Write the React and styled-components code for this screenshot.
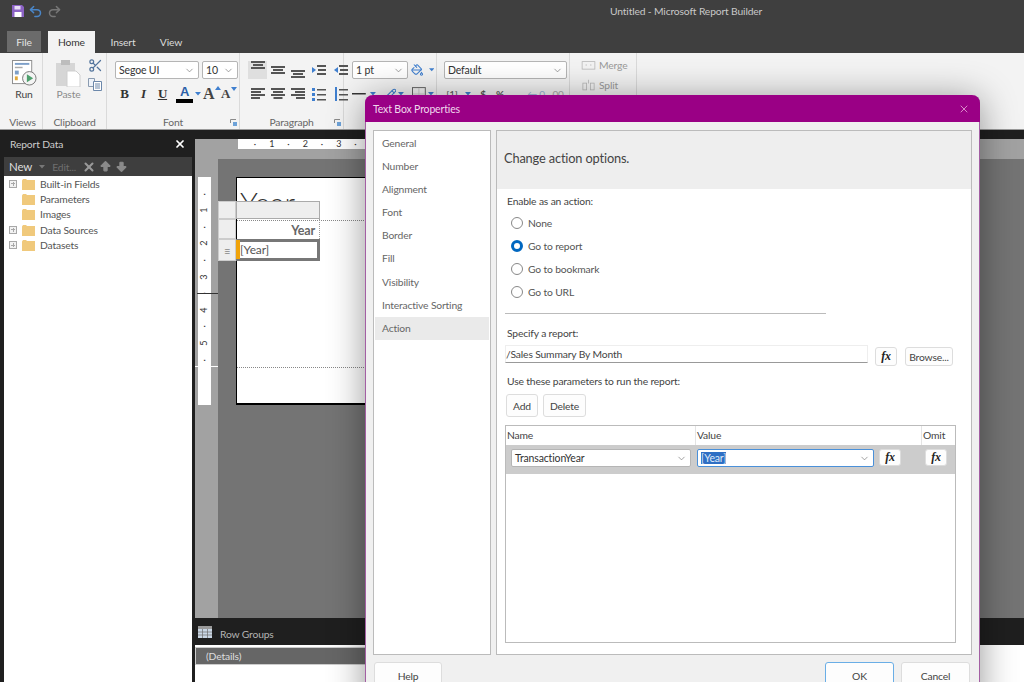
import React from 'react';
import styled, { createGlobalStyle } from 'styled-components';
import { ArrowBigDown, ArrowBigUp, ChevronDown, PaintBucket, Pencil, Redo2, Scissors, Undo2, X } from 'lucide-react';

const GlobalStyle = createGlobalStyle`
  html, body {
    margin: 0;
    padding: 0;
    background: #1f1f1f;
    font-family: Lato, "Noto Sans", sans-serif;
    font-size: 10.3px;
    letter-spacing: -0.15px;
  }
`;

const Page = styled.div`
  position: relative;
  width: 1024px;
  height: 682px;
  overflow: hidden;
  display: flex;
  flex-direction: column;
  background: #1f1f1f;
`;

/* title bar + tabs */
const TitleBar = styled.div`
  height: 30px;
  background: #3f3f3f;
  display: flex;
  align-items: center;
  padding-left: 12px;
  gap: 4px;
  color: #c8c8c8;
`;

const AppTitle = styled.span`
  margin-left: 544px;
  position: relative;
  top: -4px;
`;

const TabRow = styled.div`
  height: 23px;
  background: #3f3f3f;
  display: flex;
  align-items: flex-end;
  padding-left: 7px;
`;

const FileTab = styled.div`
  width: 34px;
  height: 21px;
  margin: 0 7px 1px 0;
  background: #6b6b6b;
  color: #e4e4e4;
  display: flex;
  align-items: center;
  justify-content: center;
`;

const Tab = styled.div`
  width: ${p => p.$w}px;
  height: 22px;
  margin-left: ${p => p.$ml || 0}px;
  background: ${p => (p.$active ? '#f3f3f3' : 'transparent')};
  color: ${p => (p.$active ? '#333' : '#dcdcdc')};
  display: flex;
  align-items: center;
  justify-content: center;
`;

/* ribbon */
const Ribbon = styled.div`
  height: 77px;
  box-sizing: border-box;
  background: #f3f3f3;
  border-bottom: 1px solid #9a9a9a;
  display: flex;
  padding-left: 3px;
`;

const Group = styled.div`
  position: relative;
  width: ${p => p.$w}px;
  box-sizing: border-box;
  border-right: 1px solid #dadada;
  display: flex;
  flex-direction: column;
`;

const GroupBody = styled.div`
  flex: 1;
  display: flex;
  flex-direction: ${p => p.$row ? 'row' : 'column'};
  gap: ${p => (p.$row ? '7px' : p.$gap || '6px')};
  padding: ${p => p.$top ?? 8}px 0 0 ${p => p.$pad || 0}px;
`;

const GroupLabel = styled.div`
  height: 16px;
  line-height: 18px;
  text-align: center;
  color: #666;
`;

const Launcher = styled.svg`
  position: absolute;
  right: 2px;
  bottom: 3px;
`;

const RibbonRow = styled.div`
  height: 18px;
  display: flex;
  align-items: center;
  gap: ${p => p.$gap || 0}px;
`;

const BigButton = styled.div`
  width: ${p => p.$w}px;
  display: flex;
  flex-direction: column;
  align-items: center;
  gap: 0;
  margin-top: -1px;
  line-height: 15px;
  color: ${p => (p.$off ? '#8b8b8b' : '#444')};
`;

const StackedIcons = styled.div`
  display: flex;
  flex-direction: column;
  gap: 5px;
  margin-top: -3px;
`;

const SelectBox = styled.div`
  width: ${p => p.$w}px;
  height: ${p => p.$h || 18}px;
  box-sizing: border-box;
  flex: none;
  background: #fff;
  border: 1px solid ${p => p.$border || '#b5b5b5'};
  border-radius: 2px;
  padding: 0 3px;
  display: flex;
  align-items: center;
  justify-content: space-between;
  color: #333;
  font-size: 10.5px;
  white-space: nowrap;
`;

const FontKey = styled.span`
  width: 19px;
  text-align: center;
  font-family: "Liberation Serif", serif;
  font-weight: bold;
  font-style: ${p => (p.$italic ? 'italic' : 'normal')};
  text-decoration: ${p => (p.$under ? 'underline' : 'none')};
  font-size: 13px;
  color: #333;
`;

const ColorA = styled.span`
  width: 17px;
  margin-left: 4px;
  height: 18px;
  border-bottom: 4px solid #000;
  box-sizing: border-box;
  text-align: center;
  font-family: "Liberation Sans", sans-serif;
  font-weight: bold;
  font-size: 13px;
  line-height: 13px;
  color: #2c5fa8;
`;

const SizeKey = styled.span`
  position: relative;
  width: ${p => p.$w}px;
  flex: none;
  font-family: "Liberation Serif", serif;
  font-weight: bold;
  font-size: ${p => p.$size}px;
  color: #444;
`;

const SizeArrow = styled.svg`
  position: absolute;
  right: 0;
  top: 1px;
`;

const AlignCell = styled.span`
  width: ${p => p.$w || 19}px;
  height: 18px;
  display: flex;
  align-items: ${p => p.$v || 'center'};
  justify-content: center;
  background: ${p => (p.$on ? '#dfdfdf' : 'transparent')};
  flex: none;
`;

const NumKey = styled.span`
  font-size: 10px;
  font-weight: ${p => (p.$b ? 'bold' : 'normal')};
  color: ${p => p.$c || '#555'};
  width: ${p => p.$w}px;
  text-align: center;
`;

const DisabledText = styled.span`
  color: #9a9a9a;
  margin-left: 3px;
`;

/* main area */
const Main = styled.div`
  flex: 1;
  min-height: 0;
  display: flex;
`;

const ReportData = styled.div`
  width: 192px;
  margin-right: 3px;
  display: flex;
  flex-direction: column;
  color: #ccc;
`;

const PanelHead = styled.div`
  height: 27px;
  display: flex;
  align-items: center;
  justify-content: space-between;
  padding: 0 6px 0 10px;
`;

const PanelTools = styled.div`
  height: 19px;
  margin-left: 4px;
  background: #3e3e3e;
  display: flex;
  align-items: center;
  padding-left: 5px;
`;

const ToolText = styled.span`
  font-size: ${p => p.$size || 11.5}px;
  color: ${p => p.$c || '#ddd'};
  margin-right: ${p => p.$mr || 0}px;
`;

const Tree = styled.div`
  flex: 1;
  margin-left: 4px;
  background: #fff;
`;

const TreeRow = styled.div`
  height: 15.4px;
  display: flex;
  align-items: center;
  color: #555;
`;

const Plus = styled.span`
  width: 8px;
  height: 8px;
  margin: 0 5px 0 5px;
  box-sizing: border-box;
  border: 1px solid #a8a8a8;
  background: linear-gradient(#a8a8a8, #a8a8a8) center / 4px 1px no-repeat, linear-gradient(#a8a8a8, #a8a8a8) center / 1px 4px no-repeat, #f2f2f2;
  visibility: ${p => (p.$hidden ? 'hidden' : 'visible')};
`;

const Folder = styled.svg`
  margin-right: 5px;
  flex: none;
`;

const Work = styled.div`
  flex: 1;
  min-width: 0;
  display: flex;
  flex-direction: column;
  padding-top: 9px;
`;

const Canvas = styled.div`
  flex: 1;
  min-height: 0;
  display: grid;
  grid-template-columns: 23px 1fr;
  grid-template-rows: 20px 1fr;
`;

const TopStrip = styled.div`
  grid-column: 1 / 3;
  background: #a2a2a2;
  padding-left: 43px;
`;

const HRuler = styled.div`
  width: 127px;
  height: 10px;
  box-sizing: border-box;
  padding-left: 8.6px;
  background: #fff;
  display: flex;
`;

const RulerMark = styled.span`
  width: 16.75px;
  flex: none;
  text-align: center;
  font-size: 9px;
  line-height: 10px;
  color: #333;
`;

const LeftStrip = styled.div`
  position: relative;
  background: #a2a2a2;
  padding: 18px 0 0 3px;
`;

const VRuler = styled.div`
  width: 13px;
  height: 228px;
  box-sizing: border-box;
  padding-top: 8.7px;
  background: #fff;
  display: flex;
  flex-direction: column;
  align-items: center;
`;

const VMark = styled.span`
  height: 16.6px;
  flex: none;
  font-size: 9px;
  line-height: 16.6px;
  color: #333;
  transform: rotate(-90deg);
`;

const RulerLine = styled.div`
  position: absolute;
  left: ${p => p.$left}px;
  right: 0;
  top: ${p => p.$top}px;
  height: 1px;
  background: ${p => p.$c};
`;

const Design = styled.div`
  background: #747474;
  padding: 18px;
`;

const ReportPage = styled.div`
  position: relative;
  width: 420px;
  height: 228px;
  box-sizing: border-box;
  background: #fff;
  border-top: 1px solid #000;
  border-left: 1px solid #000;
  border-bottom: 2px solid #000;
  display: flex;
  flex-direction: column;
`;

const PageHeader = styled.div`
  height: 43px;
  flex: none;
  box-sizing: border-box;
  border-bottom: 1px dotted #888;
  overflow: hidden;
  padding-left: 3px;
  font-size: 30px;
  font-weight: 300;
  line-height: 48px;
  color: #333;
`;

const PageBody = styled.div`
  height: 147px;
  flex: none;
  box-sizing: border-box;
  border-bottom: 1px dotted #888;
`;

const Tablix = styled.div`
  position: absolute;
  left: -19px;
  top: 23px;
  display: grid;
  grid-template-columns: 18px 84px;
  grid-template-rows: 18px 20px 22px;
`;

const Handle = styled.div`
  background: #eee;
  border: 1px solid #ccc;
  box-sizing: border-box;
  display: flex;
  align-items: center;
  justify-content: center;
  color: #888;
  font-size: 11px;
`;

const ColHandle = styled(Handle)`
  border-color: #aaa;
`;

const HeadCell = styled.div`
  border-right: 1px dotted #999;
  text-align: right;
  padding-right: 4px;
  font-size: 12.5px;
  font-weight: bold;
  line-height: 24px;
  color: #666;
`;

const SelectedCell = styled.div`
  position: relative;
  box-sizing: border-box;
  background: #fff;
  border: 3px solid #777;
  border-left-width: 1px;
  padding-left: 3px;
  font-size: 12px;
  line-height: 16px;
  color: #555;
`;

const CellMarker = styled.span`
  position: absolute;
  left: -1px;
  top: -2px;
  width: 4px;
  height: 19px;
  background: #f0a30a;
`;

const RowGroups = styled.div`
  height: 64px;
  display: flex;
  flex-direction: column;
`;

const RowGroupsHead = styled.div`
  height: 27px;
  box-sizing: border-box;
  padding: 4px 0 0 3px;
  flex: none;
  display: flex;
  align-items: center;
  gap: 8px;
  color: #b4b4b4;
`;

const RowGroupsBody = styled.div`
  flex: 1;
  background: #fff;
  padding-top: 2px;
`;

const DetailsBar = styled.div`
  width: 600px;
  height: 18px;
  box-sizing: border-box;
  border: 1px solid #ccc;
  background: #666;
  color: #ddd;
  line-height: 16px;
  padding-left: 10px;
`;

/* dialog */
const Dialog = styled.div`
  position: absolute;
  left: 365px;
  top: 95px;
  width: 615px;
  height: 620px;
  box-sizing: border-box;
  display: flex;
  flex-direction: column;
  background: #f0f0f0;
  border: 1px solid #a35fa3;
  border-top: none;
  border-radius: 8px 8px 0 0;
  box-shadow: 0 4px 36px rgba(0, 0, 0, 0.42);
  color: #555;
`;

const DialogHead = styled.div`
  height: 27px;
  flex: none;
  margin: 0 -1px;
  background: #9a0085;
  border-radius: 8px 8px 0 0;
  display: flex;
  align-items: center;
  justify-content: space-between;
  padding: 0 10px 0 8px;
  color: #f0d8ec;
  font-size: 10.5px;
`;

const DialogPanes = styled.div`
  height: 525px;
  flex: none;
  display: flex;
  gap: 5px;
  padding: 8px 7px 0 7px;
`;

const NavList = styled.div`
  width: 118px;
  box-sizing: border-box;
  background: #fff;
  border: 1px solid #bbb;
  padding: 1px;
  display: flex;
  flex-direction: column;
`;

const NavItem = styled.div`
  height: 23.1px;
  line-height: 22px;
  flex: none;
  padding-left: 7px;
  color: #666;
  background: ${p => (p.$active ? '#eaeaea' : 'transparent')};
`;

const Pane = styled.div`
  flex: 1;
  box-sizing: border-box;
  background: #fff;
  border: 1px solid #bbb;
  display: flex;
  flex-direction: column;
`;

const PaneHead = styled.div`
  height: 58px;
  flex: none;
  background: #eee;
  padding-left: 7px;
  line-height: 54px;
  font-size: 12.8px;
  color: #444;
`;

const PaneBody = styled.div`
  flex: 1;
  display: flex;
  flex-direction: column;
  padding: 4px 15px 0 8px;
`;

const FieldLabel = styled.div`
  height: 16px;
  line-height: 16px;
  padding-left: 2px;
  color: #444;
  margin-top: ${p => p.$mt || 0}px;
`;

const RadioGroup = styled.div`
  margin-top: 2px;
  display: flex;
  flex-direction: column;
  padding-left: 6px;
`;

const RadioRow = styled.div`
  height: 23px;
  display: flex;
  align-items: center;
  gap: 5px;
`;

const RadioDot = styled.span`
  width: 12px;
  height: 12px;
  flex: none;
  box-sizing: border-box;
  border-radius: 50%;
  background: #fff;
  border: ${p => (p.$on ? '3.5px solid #0067c0' : '1px solid #888')};
`;

const Rule = styled.div`
  width: 321px;
  height: 1px;
  margin-top: 10px;
  background: #bbb;
`;

const ReportRow = styled.div`
  display: flex;
  align-items: flex-start;
  margin-top: 4px;
`;

const ReportInput = styled.div`
  width: 363px;
  height: 18px;
  box-sizing: border-box;
  border: 1px solid #eee;
  border-bottom-color: #999;
  line-height: 16px;
  color: #444;
`;

const Btn = styled.div`
  width: ${p => p.$w}px;
  height: ${p => p.$h || 19}px;
  margin-left: ${p => p.$ml || 0}px;
  margin-top: ${p => p.$mt || 0}px;
  flex: none;
  box-sizing: border-box;
  background: #fdfdfd;
  border: 1px solid ${p => p.$border || '#ddd'};
  border-radius: 3px;
  display: flex;
  align-items: center;
  justify-content: center;
  color: #444;
`;

const Fx = styled(Btn)`
  font-family: "Liberation Serif", serif;
  font-weight: bold;
  font-style: italic;
  font-size: 12px;
  color: #222;
`;

const ButtonRow = styled.div`
  display: flex;
  gap: 5px;
  margin-top: 5px;
`;

const ParamGrid = styled.div`
  height: 218px;
  margin-top: 8px;
  box-sizing: border-box;
  border: 1px solid #bbb;
`;

const ParamCols = styled.div`
  display: grid;
  grid-template-columns: 190px 226px 1fr;
  height: 19px;
  align-items: center;
  color: #444;
`;

const ParamCol = styled.span`
  height: 100%;
  line-height: 18px;
  padding-left: 1px;
  border-right: ${p => (p.$sep ? '1px solid #e4e4e4' : 'none')};
`;

const ParamRow = styled.div`
  height: 29px;
  box-sizing: border-box;
  background: #ccc;
  display: flex;
  align-items: flex-start;
  padding: 4px 0 0 5px;
`;

const Highlight = styled.span`
  background: #2f6fc4;
  color: #dfe9f7;
`;

const DialogFoot = styled.div`
  display: flex;
  justify-content: space-between;
  padding: 7px 9px 0 8px;
`;

const FootRight = styled.div`
  display: flex;
  gap: 7px;
`;

const navItems = ['General', 'Number', 'Alignment', 'Font', 'Border', 'Fill', 'Visibility', 'Interactive Sorting', 'Action'];
const treeItems = [
  { name: 'Built-in Fields', plus: true },
  { name: 'Parameters' },
  { name: 'Images' },
  { name: 'Data Sources', plus: true },
  { name: 'Datasets', plus: true },
];
const radios = ['None', 'Go to report', 'Go to bookmark', 'Go to URL'];
const hMarks = ['·', '1', '·', '2', '·', '3', '·'];
const vMarks = ['·', '1', '·', '2', '·', '3', '·', '4', '·', '5', '·', '', ''];

function Chevron({ size = 11 }) {
  return <ChevronDown size={size} color="#777" strokeWidth={1.5} />;
}

function TextLines({ widths, align = 'left', w = 14, color = '#555' }) {
  return (
    <svg width={w} height={widths.length * 3} viewBox={`0 0 ${w} ${widths.length * 3}`}>
      {widths.map((lw, i) => {
        const x = align === 'left' ? 0 : align === 'right' ? w - lw : (w - lw) / 2;
        return <rect key={i} x={x} y={i * 3} width={lw} height="2" fill={color} />;
      })}
    </svg>
  );
}

function IndentIcon({ flip }) {
  return (
    <svg width="14" height="13" viewBox="0 0 14 13">
      <g fill="#555">
        <rect x="5" y="1" width="9" height="2" /><rect x="6" y="5" width="8" height="2" />
        <rect x="5" y="9" width="9" height="2" />
      </g>
      <path d={flip ? 'M4 3v6L0 6z' : 'M0 3v6l4-3z'} fill="#3f7fcf" />
    </svg>
  );
}

function ListIcon({ numbered }) {
  return (
    <svg width="14" height="14" viewBox="0 0 14 14">
      <g fill="#3f7fcf">
        {numbered
          ? <rect x="1" y="0" width="2" height="14" />
          : <><rect x="0" y="1" width="3" height="3" /><rect x="0" y="6" width="3" height="3" /><rect x="0" y="11" width="3" height="3" /></>}
      </g>
      <g fill="#555">
        <rect x="5" y="2" width="9" height="1.5" /><rect x="5" y="7" width="9" height="1.5" /><rect x="5" y="12" width="9" height="1.5" />
      </g>
    </svg>
  );
}

function Caret({ color = '#3f7fcf' }) {
  return (
    <svg width="6" height="4" viewBox="0 0 6 4" style={{ margin: '0 2px' }}>
      <path d="M0 0h6L3 3.5z" fill={color} />
    </svg>
  );
}

function SizeButton({ up }) {
  return (
    <SizeKey $w={up ? 18 : 16} $size={up ? 16 : 13}>
      A
      <SizeArrow width="6" height="4" viewBox="0 0 6 4">
        <path d={up ? 'M0 4l3-4 3 4z' : 'M0 0h6L3 4z'} fill="#3f7fcf" />
      </SizeArrow>
    </SizeKey>
  );
}

function CornerMark() {
  return (
    <Launcher width="7" height="7" viewBox="0 0 7 7">
      <path d="M0.500 4V0.500H6" fill="none" stroke="#8a8a8a" />
      <path d="M3 3h4v4H3z" fill="#6da2d8" />
    </Launcher>
  );
}

function SaveIcon() {
  return (
    <svg width="12" height="12" viewBox="0 0 12 12" style={{ marginTop: -8 }}>
      <path d="M0 0h10l2 2v10H0z" fill="#8b62c4" />
      <rect x="2.500" y="1" width="6" height="3.500" fill="#e8def5" />
      <rect x="2.500" y="7" width="7" height="5" fill="#fff" />
    </svg>
  );
}

function RunIcon() {
  return (
    <svg width="25" height="27" viewBox="0 0 26 28">
      <rect x="0.500" y="0.500" width="20" height="24" fill="#fff" stroke="#8c8c8c" />
      <rect x="3" y="3" width="15" height="2" fill="#7d9fc8" />
      <rect x="3" y="7" width="8" height="1.500" fill="#aaa" />
      <rect x="3" y="11" width="4" height="4" fill="#7d9fc8" />
      <rect x="3" y="17" width="3" height="4" fill="#e0a93c" />
      <circle cx="18" cy="19" r="7" fill="#f4f4f4" stroke="#777" />
      <path d="M15.500 14.800v8.400l6.500-4.200z" fill="#4fa06e" />
    </svg>
  );
}

function PasteIcon() {
  return (
    <svg width="25" height="27" viewBox="0 0 25 27">
      <rect x="0" y="3" width="19" height="23" fill="#d6d6d6" />
      <rect x="5" y="0" width="9" height="5" fill="#bdbdbd" />
      <path d="M11 11h9l4 4v12H11z" fill="#fff" stroke="#cfcfcf" />
    </svg>
  );
}

function CopyIcon() {
  return (
    <svg width="14" height="13" viewBox="0 0 14 13">
      <path d="M0.500 0.500h6v8h-6z" fill="#eef3fa" stroke="#8a9bb0" />
      <path d="M5.500 3.500h8v9h-8z" fill="#fff" stroke="#6c88ab" />
      <path d="M7 6h5M7 8h5M7 10h5" stroke="#6c88ab" />
    </svg>
  );
}

function FolderIcon() {
  return (
    <Folder width="13" height="12" viewBox="0 0 13 12">
      <path d="M0 2.500L1 1h3l1 1h8v10H0z" fill="#f0c97c" />
    </Folder>
  );
}

function BorderIcon() {
  return (
    <svg width="14" height="14" viewBox="0 0 14 14">
      <rect x="0.500" y="0.500" width="13" height="13" fill="none" stroke="#666" />
      <path d="M7 1v12M1 7h12" stroke="#ccc" />
    </svg>
  );
}

function MergeIcon({ split }) {
  return (
    <svg width="15" height="16" viewBox="0 0 20 16">
      <g fill="none" stroke="#b5b5b5">
        {split ? (
          <><rect x="2.500" y="5.500" width="5" height="9" /><rect x="12.500" y="5.500" width="5" height="9" /></>
        ) : (
          <rect x="1.500" y="3.500" width="17" height="10" />
        )}
      </g>
      <path d={split ? 'M10 1v5' : 'M6 8h2M12 8h2'} stroke="#b5b5b5" />
    </svg>
  );
}

function GridIcon() {
  return (
    <svg width="14" height="12" viewBox="0 0 14 12" style={{ marginTop: -4 }}>
      <rect width="14" height="3" fill="#9a9a9a" />
      <path d="M0 3h14v9H0z" fill="#c9d6e4" />
      <path d="M0 6h14M0 9h14M4.500 3v9M9.500 3v9" stroke="#6d6d6d" strokeWidth="0.700" />
    </svg>
  );
}

function App() {
  return (
    <Page>
      <GlobalStyle />
      <TitleBar>
        <SaveIcon />
        <Undo2 size={15} color="#4a86c8" strokeWidth={2.4} style={{ marginTop: -8 }} />
        <Redo2 size={15} color="#777" strokeWidth={2.4} style={{ marginTop: -8 }} />
        <AppTitle>Untitled - Microsoft Report Builder</AppTitle>
      </TitleBar>
      <TabRow>
        <FileTab>File</FileTab>
        <Tab $active $w={47}>Home</Tab>
        <Tab $w={30} $ml={13}>Insert</Tab>
        <Tab $w={26} $ml={20}>View</Tab>
      </TabRow>

      <Ribbon>
        <Group $w={40}>
          <GroupBody $pad={8}><BigButton $w={26}><RunIcon />Run</BigButton></GroupBody>
          <GroupLabel>Views</GroupLabel>
        </Group>
        <Group $w={64}>
          <GroupBody $row $pad={13}>
            <BigButton $w={25} $off><PasteIcon />Paste</BigButton>
            <StackedIcons>
              <Scissors size={15} color="#53749c" />
              <CopyIcon />
            </StackedIcons>
          </GroupBody>
          <GroupLabel>Clipboard</GroupLabel>
        </Group>
        <Group $w={133}>
          <GroupBody $pad={8}>
            <RibbonRow $gap={3}>
              <SelectBox $w={84}>Segoe UI<Chevron /></SelectBox>
              <SelectBox $w={36}>10<Chevron /></SelectBox>
            </RibbonRow>
            <RibbonRow>
              <FontKey>B</FontKey>
              <FontKey $italic>I</FontKey>
              <FontKey $under>U</FontKey>
              <ColorA>A</ColorA>
              <Caret />
              <SizeButton up />
              <SizeButton />
            </RibbonRow>
          </GroupBody>
          <GroupLabel>Font</GroupLabel>
          <CornerMark />
        </Group>
        <Group $w={104}>
          <GroupBody $pad={8}>
            <RibbonRow $gap={1}>
              <AlignCell $on $v="flex-start"><TextLines widths={[14, 10, 14]} align="center" /></AlignCell>
              <AlignCell><TextLines widths={[14, 10, 14]} align="center" /></AlignCell>
              <AlignCell $v="flex-end"><TextLines widths={[14, 10, 14]} align="center" /></AlignCell>
              <AlignCell $w={22}><IndentIcon /></AlignCell>
              <AlignCell><IndentIcon flip /></AlignCell>
            </RibbonRow>
            <RibbonRow $gap={1}>
              <AlignCell><TextLines widths={[14, 10, 14, 9]} /></AlignCell>
              <AlignCell><TextLines widths={[14, 10, 14, 9]} align="center" /></AlignCell>
              <AlignCell><TextLines widths={[14, 10, 14, 9]} align="right" /></AlignCell>
              <AlignCell $w={22}><ListIcon /></AlignCell>
              <AlignCell><ListIcon numbered /></AlignCell>
            </RibbonRow>
          </GroupBody>
          <GroupLabel>Paragraph</GroupLabel>
          <CornerMark />
        </Group>
        <Group $w={93}>
          <GroupBody $pad={8}>
            <RibbonRow $gap={3}>
              <SelectBox $w={56}>1 pt<Chevron /></SelectBox>
              <PaintBucket size={14} color="#3f7fcf" />
              <Caret />
            </RibbonRow>
            <RibbonRow>
              <svg width="16" height="4" viewBox="0 0 16 4"><rect y="1" width="14" height="1.500" fill="#333" /></svg>
              <Caret />
              <Pencil size={13} color="#3f7fcf" style={{ marginLeft: 6 }} />
              <Caret />
              <span style={{ width: 6 }} />
              <BorderIcon />
              <Caret />
            </RibbonRow>
          </GroupBody>
          <GroupLabel />
        </Group>
        <Group $w={133}>
          <GroupBody $pad={7}>
            <RibbonRow>
              <SelectBox $w={123}>Default<Chevron /></SelectBox>
            </RibbonRow>
            <RibbonRow $gap={3}>
              <NumKey $w={16}>[1]</NumKey>
              <Caret />
              <NumKey $w={14} $b>$</NumKey>
              <NumKey $w={14} $b>%</NumKey>
              <NumKey $w={14}>,</NumKey>
              <NumKey $w={18} $c="#9bb6d8">←.0</NumKey>
              <NumKey $w={18} $c="#aaa">.00</NumKey>
            </RibbonRow>
          </GroupBody>
          <GroupLabel />
        </Group>
        <Group $w={67}>
          <GroupBody $pad={11} $top={3} $gap="2px">
            <RibbonRow><MergeIcon /><DisabledText>Merge</DisabledText></RibbonRow>
            <RibbonRow><MergeIcon split /><DisabledText>Split</DisabledText></RibbonRow>
          </GroupBody>
          <GroupLabel />
        </Group>
      </Ribbon>

      <Main>
        <ReportData>
          <PanelHead>Report Data<X size={12} color="#fff" strokeWidth={3.5} /></PanelHead>
          <PanelTools>
            <ToolText $mr={5}>New</ToolText>
            <Caret color="#777" />
            <ToolText $c="#6f6f6f" $size={10.3} $mr={6} style={{ marginLeft: 5 }}>Edit...</ToolText>
            <X size={14} color="#999" strokeWidth={3.5} />
            <ArrowBigUp size={13} color="#8a8a8a" fill="#8a8a8a" style={{ marginLeft: 3 }} />
            <ArrowBigDown size={13} color="#8a8a8a" fill="#8a8a8a" style={{ marginLeft: 3 }} />
          </PanelTools>
          <Tree>
            {treeItems.map(item => (
              <TreeRow key={item.name}>
                <Plus $hidden={!item.plus} />
                <FolderIcon />
                {item.name}
              </TreeRow>
            ))}
          </Tree>
        </ReportData>

        <Work>
          <Canvas>
            <TopStrip>
              <HRuler>
                {hMarks.map((m, i) => <RulerMark key={i}>{m}</RulerMark>)}
              </HRuler>
            </TopStrip>
            <LeftStrip>
              <VRuler>
                {vMarks.map((m, i) => <VMark key={i}>{m}</VMark>)}
              </VRuler>
              <RulerLine $left={2} $top={134} $c="#333" />
              <RulerLine $left={0} $top={207} $c="#fff" />
            </LeftStrip>
            <Design>
              <ReportPage>
                <PageHeader>Year</PageHeader>
                <PageBody />
                <Tablix>
                  <Handle />
                  <ColHandle />
                  <Handle />
                  <HeadCell>Year</HeadCell>
                  <Handle>≡</Handle>
                  <SelectedCell><CellMarker />[Year]</SelectedCell>
                </Tablix>
              </ReportPage>
            </Design>
          </Canvas>
          <RowGroups>
            <RowGroupsHead><GridIcon />Row Groups</RowGroupsHead>
            <RowGroupsBody><DetailsBar>(Details)</DetailsBar></RowGroupsBody>
          </RowGroups>
        </Work>
      </Main>

      <Dialog>
        <DialogHead>
          Text Box Properties
          <X size={12} color="#eeb8e0" strokeWidth={1.5} />
        </DialogHead>
        <DialogPanes>
          <NavList>
            {navItems.map(n => <NavItem key={n} $active={n === 'Action'}>{n}</NavItem>)}
          </NavList>
          <Pane>
            <PaneHead>Change action options.</PaneHead>
            <PaneBody>
              <FieldLabel>Enable as an action:</FieldLabel>
              <RadioGroup>
                {radios.map((r, i) => (
                  <RadioRow key={r}><RadioDot $on={i === 1} />{r}</RadioRow>
                ))}
              </RadioGroup>
              <Rule />
              <FieldLabel $mt={11}>Specify a report:</FieldLabel>
              <ReportRow>
                <ReportInput>/Sales Summary By Month</ReportInput>
                <Fx $w={22} $ml={7} $mt={2}>fx</Fx>
                <Btn $w={48} $ml={8} $mt={2}>Browse...</Btn>
              </ReportRow>
              <FieldLabel $mt={7}>Use these parameters to run the report:</FieldLabel>
              <ButtonRow>
                <Btn $w={32} $h={23} $ml={1}>Add</Btn>
                <Btn $w={43} $h={23}>Delete</Btn>
              </ButtonRow>
              <ParamGrid>
                <ParamCols>
                  <ParamCol $sep>Name</ParamCol>
                  <ParamCol $sep>Value</ParamCol>
                  <ParamCol>Omit</ParamCol>
                </ParamCols>
                <ParamRow>
                  <SelectBox $w={180} $h={18}>TransactionYear<Chevron /></SelectBox>
                  <SelectBox $w={177} $h={18} $border="#4a90d9" style={{ marginLeft: 6 }}>
                    <Highlight>[Year]</Highlight><Chevron />
                  </SelectBox>
                  <Fx $w={22} $h={17} $ml={5}>fx</Fx>
                  <Fx $w={22} $h={17} $ml={24}>fx</Fx>
                </ParamRow>
              </ParamGrid>
            </PaneBody>
          </Pane>
        </DialogPanes>
        <DialogFoot>
          <Btn $w={68} $h={28}>Help</Btn>
          <FootRight>
            <Btn $w={69} $h={28} $border="#6aaee6">OK</Btn>
            <Btn $w={69} $h={28}>Cancel</Btn>
          </FootRight>
        </DialogFoot>
      </Dialog>
    </Page>
  );
}

export default App;
